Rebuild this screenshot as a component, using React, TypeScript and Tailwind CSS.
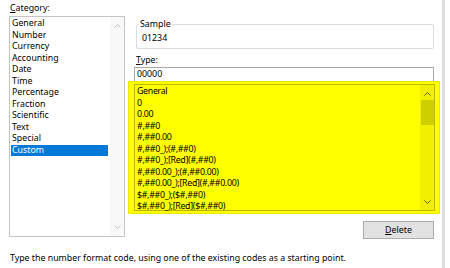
import React from 'react'

const categories = ['General', 'Number', 'Currency', 'Accounting', 'Date', 'Time', 'Percentage', 'Fraction', 'Scientific', 'Text', 'Special', 'Custom']

const codes = [
  'General',
  '0',
  '0.00',
  '#,##0',
  '#,##0.00',
  '#,##0_);(#,##0)',
  '#,##0_);[Red](#,##0)',
  '#,##0.00_);(#,##0.00)',
  '#,##0.00_);[Red](#,##0.00)',
  '$#,##0_);($#,##0)',
  '$#,##0_);[Red]($#,##0)',
]

function Chevron({ up, color }: { up?: boolean; color: string }) {
  return (
    <svg width="7" height="4" viewBox="0 0 7 4" className="block">
      <polyline
        points={up ? '0.5,3.5 3.5,0.5 6.5,3.5' : '0.5,0.5 3.5,3.5 6.5,0.5'}
        fill="none"
        stroke={color}
        strokeWidth="1"
      />
    </svg>
  )
}

export default function App() {
  return (
    <div className="w-[450px] h-[268px] bg-white flex overflow-hidden text-[8.8px] text-[#000] font-['Noto_Sans',sans-serif]">
      <div className="w-[442px] flex flex-col">
        <div className="flex h-[240px]">
          {/* category list */}
          <div className="w-[128px] pl-[9px] flex flex-col">
            <div className="h-[16px] leading-[16px] pl-[1px]">
              <span className="underline underline-offset-1">C</span>ategory:
            </div>
            <div className="w-[116px] h-[221px] border border-[#c4c4c4] flex">
              <div className="w-[100px] pt-[1px] pl-[1px]">
                {categories.map(c => (
                  <div
                    key={c}
                    className={`h-[11.5px] leading-[11.5px] w-[97px] pl-[1px] ${c === 'Custom' ? 'bg-[#0078d7] text-white' : ''}`}
                  >
                    {c}
                  </div>
                ))}
              </div>
              <div className="w-[14px] bg-[#f8f8f8] flex flex-col justify-between items-center py-[7px]">
                <Chevron up color="#c2c2c2" />
                <Chevron color="#c2c2c2" />
              </div>
            </div>
          </div>

          {/* right side */}
          <div className="flex-1 flex flex-col">
            <div className="relative mt-[24px] ml-[8px] w-[298px] h-[25px] border border-[#dcdcdc] rounded-[2px] pl-[5px] pt-[7px] leading-[12px]">
              <span className="absolute -top-[7px] left-[2px] bg-white px-[1px] leading-[12px]">Sample</span>
              01234
            </div>
            <div className="mt-[5px] ml-[8px] h-[12px] leading-[12px]">
              <span className="underline underline-offset-1">T</span>ype:
            </div>
            <div className="mt-[1px] ml-[6px] w-[300px] h-[15px] border border-[#a9a9a9] pl-[2px] leading-[13px]">
              00000
            </div>
            <div className="-mt-[1px] w-[312px] h-[133px] bg-[#ffff00] border border-[#e8e800] pl-[5px] pr-[4px] pt-[2px]">
              <div className="h-[127px] border border-[#b8b800] flex">
                <div className="flex-1 pt-[1px] pl-[2px] tracking-[-0.3px]">
                  {codes.map(c => (
                    <div key={c} className="h-[11.5px] leading-[11.5px]">
                      {c}
                    </div>
                  ))}
                </div>
                <div className="w-[14px] bg-[#f0f000] flex flex-col items-center pt-[7px] pb-[6px]">
                  <Chevron up color="#5a5a00" />
                  <div className="mt-[4px] w-[13px] h-[25px] bg-[#cfcf00]" />
                  <div className="flex-1" />
                  <Chevron color="#5a5a00" />
                </div>
              </div>
            </div>
            <button className="mt-[7px] ml-auto mr-[8px] w-[71px] h-[18px] bg-[#e1e1e1] border border-[#adadad] leading-[16px] text-center">
              <span className="underline underline-offset-1">D</span>elete
            </button>
          </div>
        </div>
        <div className="pt-[12px] pl-[10px] leading-[12px] whitespace-nowrap">
          Type the number format code, using one of the existing codes as a starting point.
        </div>
      </div>
      <div className="w-[3px] bg-[#dcdcdc]" />
    </div>
  )
}
